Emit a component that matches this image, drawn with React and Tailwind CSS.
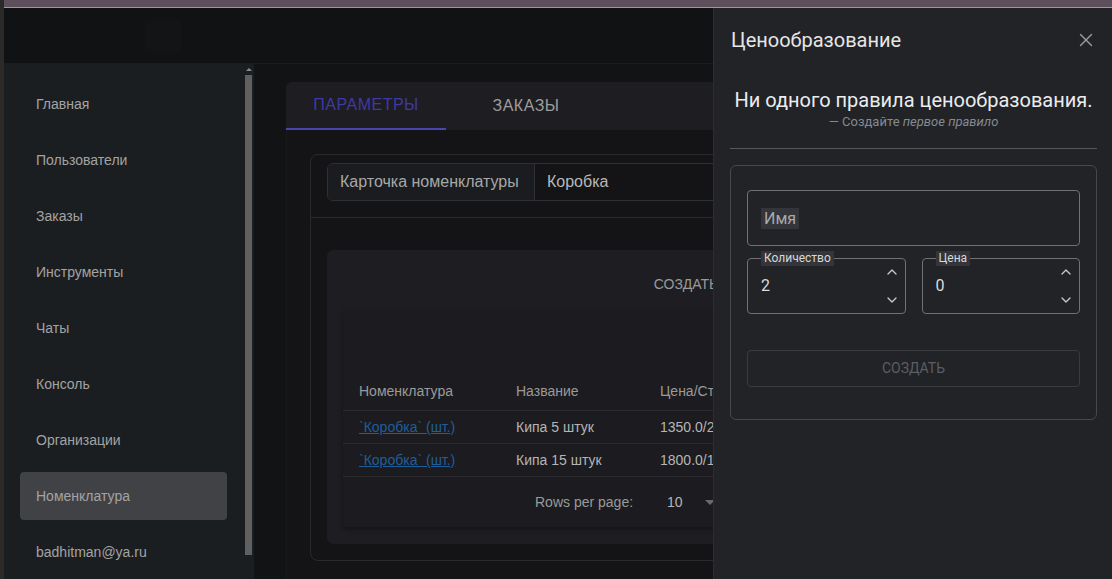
import React from "react";
import { X, ChevronUp, ChevronDown } from "lucide-react";

const navItems = [
    "Главная",
    "Пользователи",
    "Заказы",
    "Инструменты",
    "Чаты",
    "Консоль",
    "Организации",
    "Номенклатура",
    "badhitman@ya.ru",
];

const rows = [
    { name: "Кипа 5 штук", price: "1350.0/25" },
    { name: "Кипа 15 штук", price: "1800.0/15" },
];

const NumberField = ({ label, value }) => (
    <div className="relative h-[56px] rounded-[4px] border border-[#6f7175] flex items-center pl-[13px] pr-[4px]">
        <span className="absolute -top-[8px] left-[13px] bg-[#33353a] px-[3px] text-[12px] leading-[15px] text-[#d8d8d8]">
            {label}
        </span>
        <span className="flex-1 text-[16px] text-[#dcdcdc]">{value}</span>
        <div className="flex flex-col justify-between h-[44px] pr-[1px] text-[#c8c8c8]">
            <ChevronUp size={16} strokeWidth={2} />
            <ChevronDown size={16} strokeWidth={2} />
        </div>
    </div>
);

const App = () => {
    return (
        <div className="relative w-[1112px] h-[579px] overflow-hidden flex bg-[#121315] font-['Liberation_Sans',Arial,sans-serif]">
            <div className="w-[4px] shrink-0 bg-[#2b2a29]" />
            <div className="flex-1 flex flex-col min-w-0">
                <div className="h-[8px] shrink-0 bg-[#5e4f5c] border-b border-[#a394a2]" />
                <header className="h-[56px] shrink-0 bg-[#111214] border-b border-[#1c1d20] flex items-center">
                    <div className="ml-[141px] w-[36px] h-[32px] bg-[#131416]" />
                </header>
                <div className="flex flex-1 min-h-0">
                    <aside className="relative w-[250px] shrink-0 bg-[#1b1e21] pt-[16px] pl-[16px] pr-[27px]">
                        <nav className="flex flex-col gap-[8px]">
                            {navItems.map((item) => (
                                <div
                                    key={item}
                                    className={`h-[48px] flex items-center px-[16px] rounded-[4px] text-[14px] text-[#a3a3a3] ${item === "Номенклатура" ? "bg-[#414245]" : ""}`}
                                >
                                    {item}
                                </div>
                            ))}
                        </nav>
                        <div className="absolute right-[2px] top-0 bottom-0 w-[7px]">
                            <div className="mx-auto mt-[4px] w-0 h-0 border-l-[3px] border-r-[3px] border-b-[3px] border-l-transparent border-r-transparent border-b-[#8a8a8a]" />
                            <div className="mt-[4px] h-[480px] bg-[#606060]" />
                        </div>
                    </aside>
                    <main className="flex-1 min-w-0 pt-[18px] pl-[32px] overflow-hidden">
                        <div className="w-[794px] h-[600px] bg-[#141416] rounded-t-[6px] border-l border-[#19191c]">
                            <div className="h-[48px] bg-[#1e1d22] rounded-t-[6px] flex -ml-px">
                                <div className="w-[160px] flex items-center justify-center border-b-2 border-[#4c45b0] text-[16px] tracking-[0.03em] text-[#3f3aa3]">
                                    ПАРАМЕТРЫ
                                </div>
                                <div className="w-[160px] flex items-center justify-center text-[16px] tracking-[0.03em] text-[#9d9d9d]">
                                    ЗАКАЗЫ
                                </div>
                            </div>
                            <div className="pt-[24px] pl-[23px] pr-[24px]">
                                <div className="h-[407px] rounded-[8px] border border-[#2a2a2e]">
                                    <div className="pt-[8px] px-[16px] pb-[16px] border-b border-[#2a2a2e]">
                                        <div className="flex h-[38px] rounded-[6px] border border-[#2e3034] overflow-hidden">
                                            <div className="w-[207px] bg-[#1a1c1f] border-r border-[#2e3034] flex items-center px-[12px] text-[16px] text-[#a8a8a8]">
                                                Карточка номенклатуры
                                            </div>
                                            <div className="flex-1 flex items-center px-[12px] text-[16px] text-[#b8b8b8]">
                                                Коробка
                                            </div>
                                        </div>
                                    </div>
                                    <div className="pt-[32px] px-[16px]">
                                        <div className="h-[294px] bg-[#1e1e22] rounded-[6px] px-[16px] pt-[24px]">
                                            <div className="text-center text-[14px] text-[#9a9a9a] leading-[20px] pl-[6px]">
                                                СОЗДАТЬ
                                            </div>
                                            <div className="mt-[16px] h-[217px] bg-[#1c1c20] rounded-[4px] shadow-[0_2px_4px_rgba(0,0,0,0.35)] pt-[62px]">
                                                <div className="grid grid-cols-[157px_144px_1fr] h-[39px] items-center px-[16px] border-b border-[#2c2c30] text-[14px] text-[#9a9a9a]">
                                                    <span>Номенклатура</span>
                                                    <span>Название</span>
                                                    <span>Цена/Стоимость</span>
                                                </div>
                                                {rows.map((r) => (
                                                    <div
                                                        key={r.name}
                                                        className="grid grid-cols-[157px_144px_1fr] h-[33px] items-center px-[16px] border-b border-[#2c2c30] text-[14px]"
                                                    >
                                                        <span className="text-[#1f5e98] underline">`Коробка` (шт.)</span>
                                                        <span className="text-[#b5b5b5]">{r.name}</span>
                                                        <span className="text-[#b5b5b5]">{r.price}</span>
                                                    </div>
                                                ))}
                                                <div className="h-[50px] flex items-center pl-[192px] text-[14px] text-[#9a9a9a]">
                                                    <span>Rows per page:</span>
                                                    <span className="ml-[34px] text-[#b5b5b5]">10</span>
                                                    <span className="ml-[22px] w-0 h-0 border-l-[5px] border-r-[5px] border-t-[5px] border-l-transparent border-r-transparent border-t-[#6a6a6a]" />
                                                </div>
                                            </div>
                                        </div>
                                    </div>
                                </div>
                            </div>
                        </div>
                    </main>
                </div>
            </div>

            <div className="absolute left-[713px] top-[8px] right-0 bottom-0 bg-[#212327] border-l border-[#2b2d31] pl-[16px] pr-[15px] font-['Roboto',Arial,sans-serif]">
                <div className="h-[64px] flex items-center justify-between">
                    <h2 className="text-[20px] text-[#e6e6e6] pl-[1px]">Ценообразование</h2>
                    <X size={22} strokeWidth={1.5} className="text-[#9b9b9b]" />
                </div>
                <div className="pt-[15px] text-center">
                    <div className="text-[20px] leading-[26px] text-[#ececec]">
                        Ни одного правила ценообразования.
                    </div>
                    <div className="mt-[1px] text-[13px] leading-[15px] text-[#858a91]">
                        — Создайте <em>первое правило</em>
                    </div>
                </div>
                <div className="mt-[19px] border-t border-[#55575b]" />
                <div className="mt-[16px] rounded-[6px] border border-[#46484c] px-[16px] pt-[24px] pb-[32px]">
                    <div className="h-[56px] rounded-[4px] border border-[#6f7175] flex items-center pl-[13px]">
                        <span className="bg-[#33353a] px-[3px] text-[16px] leading-[21px] text-[#a9a9a9]">Имя</span>
                    </div>
                    <div className="mt-[12px] grid grid-cols-2 gap-[16px]">
                        <NumberField label="Количество" value="2" />
                        <NumberField label="Цена" value="0" />
                    </div>
                    <div className="mt-[36px] h-[37px] rounded-[4px] border border-[#393b40] flex items-center justify-center text-[14px] text-[#5b5e63]">
                        СОЗДАТЬ
                    </div>
                </div>
            </div>
        </div>
    );
};

export default App;
